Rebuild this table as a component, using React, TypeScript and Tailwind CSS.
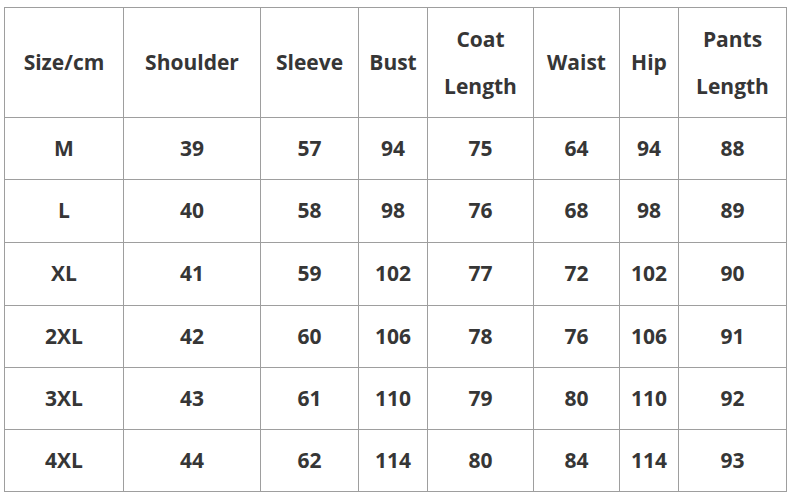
const headers = [
  ['Size/cm'],
  ['Shoulder'],
  ['Sleeve'],
  ['Bust'],
  ['Coat', 'Length'],
  ['Waist'],
  ['Hip'],
  ['Pants', 'Length'],
]

const rows = [
  ['M', '39', '57', '94', '75', '64', '94', '88'],
  ['L', '40', '58', '98', '76', '68', '98', '89'],
  ['XL', '41', '59', '102', '77', '72', '102', '90'],
  ['2XL', '42', '60', '106', '78', '76', '106', '91'],
  ['3XL', '43', '61', '110', '79', '80', '110', '92'],
  ['4XL', '44', '62', '114', '80', '84', '114', '93'],
]

export default function App() {
  return (
    <div className="h-[500px] w-[789px] bg-white pl-[4px] pt-[7px] font-['Open_Sans',sans-serif] font-bold text-[#363636]">
      <div className="inline-grid grid-cols-[118px_136px_97px_68px_105px_85px_58px_107px] grid-rows-[109px_61px_62px_62px_61px_61px_61px] gap-px border border-[#9e9e9e] bg-[#9e9e9e]">
        {headers.map((h) => (
          <div
            key={h.join(' ')}
            className="flex flex-col items-center justify-center bg-white text-[21px] leading-[47px]"
          >
            {h.map((line) => (
              <span key={line}>{line}</span>
            ))}
          </div>
        ))}
        {rows.map((row) =>
          row.map((cell, i) => (
            <div
              key={row[0] + i}
              className="flex items-center justify-center bg-white text-[21px]"
            >
              {cell}
            </div>
          )),
        )}
      </div>
    </div>
  )
}
